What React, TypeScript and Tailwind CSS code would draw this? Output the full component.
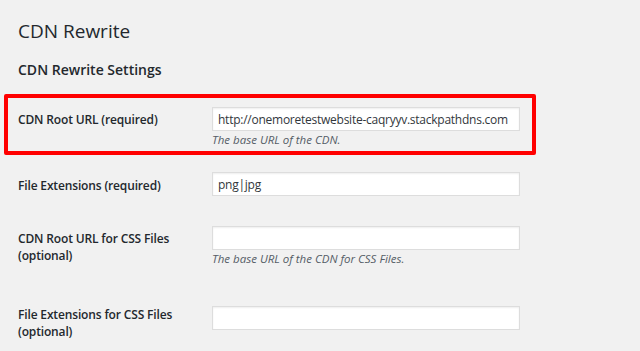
import React from "react";

const font = { fontFamily: '"Open Sans", "Noto Sans", sans-serif' };

function Field({ value, desc }: { value?: string; desc?: string }) {
  return (
    <div className="flex w-[308px] flex-col">
      <input
        readOnly
        value={value ?? ""}
        className="h-[24px] w-[308px] border border-[#dddddd] bg-white px-[5px] text-[12px] tracking-[-0.25px] text-[#32373c] shadow-[inset_0_1px_2px_rgba(0,0,0,0.07)] outline-none"
        style={font}
      />
      {desc && (
        <p className="mt-[1px] text-[11.5px] leading-[16px] italic text-[#555d66]">{desc}</p>
      )}
    </div>
  );
}

export default function App() {
  return (
    <div
      className="h-[351px] w-[640px] overflow-hidden bg-[#f1f1f1] pl-[18px] text-[#23282d]"
      style={font}
    >
      <h1 className="pt-[19px] text-[19px] leading-[24px] font-normal text-[#23282d]">CDN Rewrite</h1>
      <h2 className="mt-[17px] text-[14px] leading-[20px] font-semibold text-[#23282d]">
        CDN Rewrite Settings
      </h2>

      <div className="relative mt-[27px] flex items-start pb-[24px]">
        <div className="w-[194px] pt-[4px] text-[12px] leading-[17px] font-semibold tracking-[-0.15px]">
          CDN Root URL (required)
        </div>
        <Field value="http://onemoretestwebsite-caqryyv.stackpathdns.com" desc="The base URL of the CDN." />
        <div className="pointer-events-none absolute top-[-13px] left-[-14px] h-[61px] w-[532px] rounded-[2px] border-[4px] border-[#ff0000]" />
      </div>

      <div className="flex items-start pb-[30px]">
        <div className="w-[194px] pt-[5px] text-[12px] leading-[17px] font-semibold tracking-[-0.15px]">
          File Extensions (required)
        </div>
        <Field value="png|jpg" />
      </div>

      <div className="flex items-start pb-[39px]">
        <div className="w-[194px] pt-[4px] text-[12px] leading-[17px] font-semibold tracking-[-0.15px]">
          CDN Root URL for CSS Files
          <br />
          (optional)
        </div>
        <Field desc="The base URL of the CDN for CSS Files." />
      </div>

      <div className="flex items-start">
        <div className="w-[194px] pt-0 text-[12px] leading-[17px] font-semibold tracking-[-0.15px]">
          File Extensions for CSS Files
          <br />
          (optional)
        </div>
        <Field />
      </div>
    </div>
  );
}
